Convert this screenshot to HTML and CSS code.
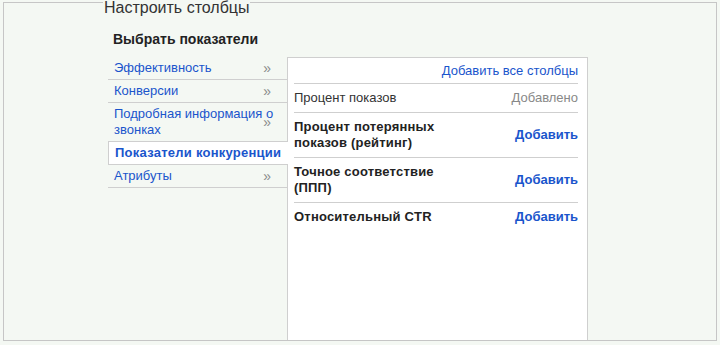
FILE: index.html
```html
<!DOCTYPE html>
<html lang="ru">
<head>
    <meta charset="UTF-8">
    <title>Настроить столбцы</title>
    <link rel="stylesheet" href="styles.css">
</head>
<body>

    <div class="settings-box">
        <div class="settings-title">Настроить столбцы</div>
        <div class="section-title">Выбрать показатели</div>

        <div class="picker">
            <ul class="category-list">
                <li class="category">Эффективность<span class="chevron">&raquo;</span></li>
                <li class="category">Конверсии<span class="chevron">&raquo;</span></li>
                <li class="category">Подробная информация о звонках<span class="chevron">&raquo;</span></li>
                <li class="category category-active">Показатели конкуренции</li>
                <li class="category">Атрибуты<span class="chevron">&raquo;</span></li>
            </ul>

            <div class="metric-panel">
                <div class="add-all"><a href="#">Добавить все столбцы</a></div>

                <div class="metric-row">
                    <span class="metric-name metric-added">Процент показов</span>
                    <span class="metric-state">Добавлено</span>
                </div>
                <div class="metric-row">
                    <span class="metric-name">Процент потерянных показов (рейтинг)</span>
                    <a href="#" class="metric-add">Добавить</a>
                </div>
                <div class="metric-row">
                    <span class="metric-name">Точное соответствие (ППП)</span>
                    <a href="#" class="metric-add">Добавить</a>
                </div>
                <div class="metric-row metric-last">
                    <span class="metric-name">Относительный CTR</span>
                    <a href="#" class="metric-add">Добавить</a>
                </div>
            </div>
        </div>
    </div>

</body>
</html>
```

FILE: styles.css
```css
body {
    margin: 0;
    background-color: #f4f8f3;
    font-family: "Liberation Sans", Arial, sans-serif;
    font-size: 13px;
    line-height: 16px;
    color: #222;
}

a {
    color: #1a55cc;
    text-decoration: none;
}

.settings-box {
    margin: 2px 3px 0 3px;
    height: 339px;
    box-sizing: border-box;
    border: 1px solid #c6c6c6;
    display: flex;
    flex-direction: column;
}

.settings-title {
    width: fit-content;
    margin: -3px 0 0 99px;
    padding: 0 1px;
    background-color: #f4f8f3;
    font-size: 16px;
    line-height: 16px;
    color: #333;
}

.section-title {
    margin: 15px 0 10px 109px;
    font-size: 14px;
    font-weight: bold;
    color: #222;
}

.picker {
    flex: 1;
    display: flex;
    margin-left: 104px;
}

.category-list {
    list-style: none;
    margin: 0;
    padding: 0;
    width: 179px;
}

.category {
    position: relative;
    padding: 3px 6px;
    border-bottom: 1px solid #cfcfcf;
    color: #1a55cc;
}

.chevron {
    position: absolute;
    right: 16px;
    top: 50%;
    transform: translateY(-50%);
    color: #8a8a8a;
    font-size: 14px;
}

.category-active {
    position: relative;
    z-index: 1;
    margin-top: -1px;
    margin-right: -1px;
    padding-left: 6px;
    border: 1px solid #cfcfcf;
    border-right: none;
    background-color: #fff;
    font-weight: bold;
    letter-spacing: 0.25px;
}

.metric-panel {
    width: 301px;
    box-sizing: border-box;
    border: 1px solid #cfcfcf;
    border-bottom: none;
    background-color: #fff;
    padding: 0 9px 0 6px;
}

.add-all {
    text-align: right;
    padding: 5px 0 4px;
    border-bottom: 1px solid #cfcfcf;
}

.metric-row {
    display: flex;
    justify-content: space-between;
    align-items: center;
    padding: 6px 0;
    border-bottom: 1px solid #cfcfcf;
}

.metric-last {
    border-bottom: none;
}

.metric-name {
    width: 155px;
    font-weight: bold;
    letter-spacing: 0.2px;
    color: #222;
}

.metric-added {
    font-weight: normal;
    letter-spacing: 0;
    color: #333;
}

.metric-state {
    color: #888;
}

.metric-add {
    font-weight: bold;
}
```
